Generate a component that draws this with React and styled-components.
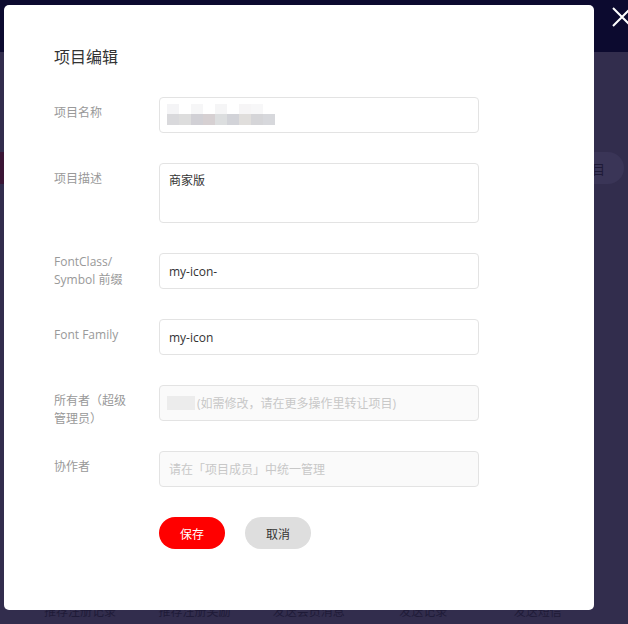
import React from "react";
import styled, { createGlobalStyle } from "styled-components";

const GlobalStyle = createGlobalStyle`
  * { box-sizing: border-box; }
  html, body { margin: 0; padding: 0; }
  body {
    background: #322d4d;
    font-family: "Open Sans", "Noto Sans CJK SC", sans-serif;
    overflow: hidden;
  }
`;

const Page = styled.div`
  position: relative;
  width: 628px;
  height: 624px;
  display: flex;
  flex-direction: column;
  background: #322d4d;
  overflow: hidden;
`;

const Header = styled.div`
  height: 52px;
  flex: none;
  background: #0c0a2f;
`;

const PageBody = styled.div`
  flex: 1;
  display: flex;
  flex-direction: column;
  padding-top: 100px;
`;

const TopRow = styled.div`
  display: flex;
  justify-content: space-between;
  align-items: center;
  height: 32px;
`;

const LeftTag = styled.div`
  width: 120px;
  height: 32px;
  background: #3a1535;
`;

const Pill = styled.div`
  width: 120px;
  height: 32px;
  margin-right: 4px;
  border-radius: 16px;
  background: #3a3557;
  color: #1e1a37;
  font-size: 13px;
  display: flex;
  align-items: center;
  justify-content: flex-end;
  padding-right: 19px;
  font-family: "Noto Sans CJK SC", sans-serif;
`;

const Spacer = styled.div`
  flex: 1;
`;

const Tabs = styled.div`
  display: flex;
  padding-left: 44px;
  height: 24px;
`;

const Tab = styled.div`
  width: 118px;
  font-size: 12px;
  line-height: 14px;
  color: #1f1b38;
  font-family: "Noto Sans CJK SC", sans-serif;
  padding-top: 4px;
  margin-right: ${(p) => p.$mr || 0}px;
`;

const Close = styled.svg`
  position: absolute;
  left: 612px;
  top: 7px;
  width: 20px;
  height: 20px;
`;

const Modal = styled.div`
  position: absolute;
  left: 4px;
  top: 5px;
  width: 590px;
  height: 605px;
  background: #fff;
  border-radius: 5px;
  padding: 40px 50px 0;
  display: flex;
  flex-direction: column;
`;

const Title = styled.h2`
  margin: 0 0 28px;
  font-size: 16px;
  line-height: 24px;
  font-weight: 400;
  color: #333;
  font-family: "Open Sans", "Noto Sans CJK SC", sans-serif;
`;

const Row = styled.div`
  display: flex;
  align-items: flex-start;
  margin-bottom: 30px;
`;

const Label = styled.label`
  width: 80px;
  height: 36px;
  overflow: visible;
  margin-right: 25px;
  flex: none;
  padding-top: ${(p) => (p.$tight ? 0 : 7)}px;
  font-size: 12px;
  line-height: 18px;
  color: #999;
`;

const fieldBase = `
  width: 320px;
  border: 1px solid #e3e3e3;
  border-radius: 4px;
  font-size: 12px;
  color: #333;
  font-family: "Open Sans", "Noto Sans CJK SC", sans-serif;
  outline: none;
`;

const Input = styled.input`
  ${fieldBase}
  height: 36px;
  padding: 0 9px;
  background: #fff;
`;

const TextArea = styled.textarea`
  ${fieldBase}
  height: 60px;
  padding: 8px 9px;
  line-height: 18px;
  resize: none;
  background: #fff;
`;

const Field = styled.div`
  ${fieldBase}
  height: 36px;
  padding: 0 9px 0 7px;
  display: flex;
  align-items: center;
  background: ${(p) => (p.$disabled ? "#fafafa" : "#fff")};
  color: #c8c8c8;
`;

const Mask = styled.span`
  display: inline-block;
  width: 28px;
  height: 14px;
  background: #ececec;
  flex: none;
`;

const Placeholder = styled.span`
  padding-left: 2px;
  color: #c8c8c8;
  white-space: nowrap;
`;

const Actions = styled.div`
  display: flex;
  gap: 20px;
  padding-left: 105px;
`;

const Button = styled.button`
  width: 66px;
  height: 32px;
  border: none;
  border-radius: 16px;
  font-size: 12px;
  font-family: "Noto Sans CJK SC", sans-serif;
  background: ${(p) => (p.$primary ? "#ff0000" : "#dedede")};
  color: ${(p) => (p.$primary ? "#fff" : "#333")};
  cursor: pointer;
  padding: 0;
`;

const mosaicTop = [
  [0, "#f4f4f6"],
  [24, "#f6f6f7"],
  [48, "#f5f5f6"],
  [72, "#f6f5f6"],
  [84, "#f7f7f8"],
];
const mosaicBottom = [
  "#d9d9dc",
  "#dddddd",
  "#d1d0d5",
  "#d6d0d2",
  "#dcdedf",
  "#d2d3d8",
  "#e0dedc",
  "#d5d5d8",
  "#d7d8dc",
];

function Mosaic() {
  return (
    <svg width="110" height="22" viewBox="0 0 110 22" style={{ flex: "none" }}>
      {mosaicTop.map(([x, c], i) => (
        <rect key={"t" + i} x={x} y="0" width="12" height="10" fill={c} />
      ))}
      {mosaicBottom.map((c, i) => (
        <rect key={"b" + i} x={i * 12} y="10" width="12" height="11" fill={c} />
      ))}
    </svg>
  );
}

export default function App() {
  return (
    <>
      <GlobalStyle />
      <Page>
        <Header />
        <PageBody>
          <TopRow>
            <LeftTag />
            <Pill>目</Pill>
          </TopRow>
          <Spacer />
          <Tabs>
            <Tab>推荐注册记录</Tab>
            <Tab>推荐注册奖励</Tab>
            <Tab $mr={12}>发送会员消息</Tab>
            <Tab>发送记录</Tab>
            <Tab>发送短信</Tab>
          </Tabs>
        </PageBody>

        <Modal>
          <Title>项目编辑</Title>
          <Row>
            <Label>项目名称</Label>
            <Field>
              <Mosaic />
            </Field>
          </Row>
          <Row>
            <Label>项目描述</Label>
            <TextArea defaultValue="商家版" />
          </Row>
          <Row>
            <Label $tight>
              FontClass/
              <br />
              Symbol 前缀
            </Label>
            <Input defaultValue="my-icon-" />
          </Row>
          <Row>
            <Label>Font Family</Label>
            <Input defaultValue="my-icon" />
          </Row>
          <Row>
            <Label>所有者（超级管理员）</Label>
            <Field $disabled>
              <Mask />
              <Placeholder>(如需修改，请在更多操作里转让项目)</Placeholder>
            </Field>
          </Row>
          <Row>
            <Label>协作者</Label>
            <Field $disabled>
              <Placeholder>请在「项目成员」中统一管理</Placeholder>
            </Field>
          </Row>
          <Actions>
            <Button $primary>保存</Button>
            <Button>取消</Button>
          </Actions>
        </Modal>

        <Close viewBox="0 0 20 20">
          <path d="M1 1 L19 19 M19 1 L1 19" stroke="#fff" strokeWidth="2" fill="none" />
        </Close>
      </Page>
    </>
  );
}
